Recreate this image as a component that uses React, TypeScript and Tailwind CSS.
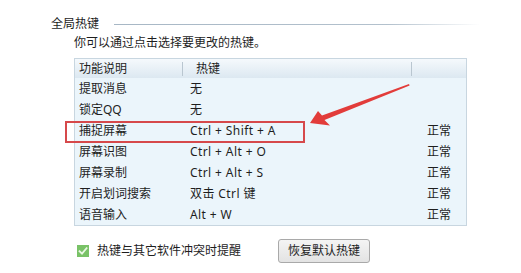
import React from "react";

const ROWS: { name: string; key: string; state: string }[] = [
  { name: "提取消息", key: "无", state: "" },
  { name: "锁定QQ", key: "无", state: "" },
  { name: "捕捉屏幕", key: "Ctrl + Shift + A", state: "正常" },
  { name: "屏幕识图", key: "Ctrl + Alt + O", state: "正常" },
  { name: "屏幕录制", key: "Ctrl + Alt + S", state: "正常" },
  { name: "开启划词搜索", key: "双击 Ctrl 键", state: "正常" },
  { name: "语音输入", key: "Alt + W", state: "正常" },
];

function CheckIcon() {
  return (
    <span className="flex h-[12px] w-[12px] items-center justify-center bg-[#79c267]">
      <svg width="10" height="10" viewBox="0 0 10 10" fill="none">
        <path d="M1.5 5.2 L4 7.6 L8.6 2.2" stroke="#eaf7e4" strokeWidth={1.8} strokeLinecap="square" />
      </svg>
    </span>
  );
}

export default function App() {
  return (
    <div
      className="relative h-[273px] w-[521px] overflow-hidden bg-white text-[12px] leading-[16px] text-[#1e1e1e]"
      style={{ fontFamily: '"Noto Sans", "Noto Sans CJK SC", sans-serif' }}
    >
      {/* 分组标题 */}
      <div className="ml-[51px] mr-[41px] mt-[16px] flex items-center">
        <span>全局热键</span>
        <div className="ml-[15px] h-px flex-1 bg-gradient-to-r from-[#a7b7c5] via-[#b3c1cd] via-75% to-white" />
      </div>

      <p className="ml-[74px] mt-[3px]">你可以通过点击选择要更改的热键。</p>

      {/* 热键列表 */}
      <div className="ml-[74px] mt-[7px] w-[393px] border border-[#c8d6e0] bg-[#ebf5fb]">
        <div className="flex h-[19px] items-center bg-gradient-to-b from-[#f5f9fc] to-[#dce8f1]">
          <div className="flex w-[108px] items-center justify-between pl-[4px]">
            <span>功能说明</span>
            <span className="h-[14px] w-px bg-[#b9c6d0]" />
          </div>
          <div className="flex w-[229px] items-center justify-between pl-[13px]">
            <span>热键</span>
            <span className="h-[14px] w-px bg-[#b9c6d0]" />
          </div>
          <div className="flex-1" />
        </div>
        {ROWS.map((row) => (
          <div key={row.name} className="flex h-[21px] items-center">
            <div className="w-[108px] pl-[4px]">{row.name}</div>
            <div className="w-[229px] pl-[7px] tracking-[0.4px]">{row.key}</div>
            <div className="flex-1 pl-[15px]">{row.state}</div>
          </div>
        ))}
      </div>

      {/* 底部 */}
      <div className="ml-[77px] mt-[13px] flex h-[24px] items-center">
        <CheckIcon />
        <span className="ml-[8px] w-[181px]">热键与其它软件冲突时提醒</span>
        <button className="flex h-[24px] w-[92px] items-center justify-center rounded-[3px] border border-[#a9a9a9] bg-gradient-to-b from-[#f4f4f4] to-[#e3e3e3] text-[#1e1e1e]">
          恢复默认热键
        </button>
      </div>

      {/* 标注 */}
      <div className="absolute left-[65px] top-[121px] h-[22px] w-[240px] border-[2.5px] border-[#d6494b]" />
      <svg className="absolute left-0 top-0" width="521" height="273" viewBox="0 0 521 273">
        <polygon
          points="310,123 318,111 322,115.5 409,84 409.6,85.4 324.5,120 330,125.5"
          fill="#e23c3a"
        />
      </svg>
    </div>
  );
}
